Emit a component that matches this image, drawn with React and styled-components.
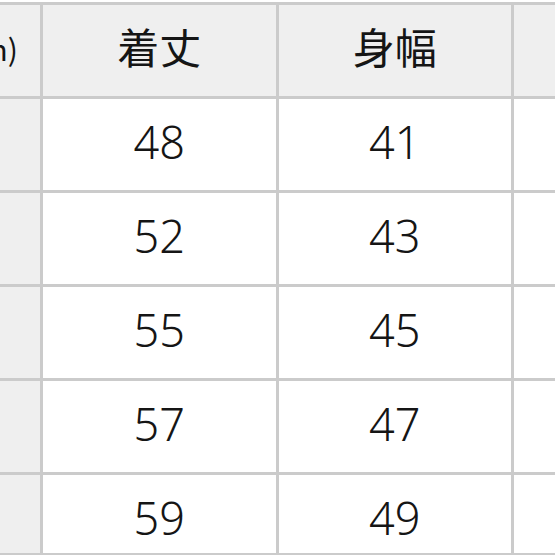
import React from 'react';
import styled, { createGlobalStyle } from 'styled-components';

const GlobalStyle = createGlobalStyle`
  html, body {
    margin: 0;
    padding: 0;
    background: #ffffff;
  }
  #root {
    width: 555px;
    height: 555px;
    overflow: hidden;
  }
`;

const columns = ['着丈', '身幅', '肩幅'];

const rows = [
  { size: 'S', values: ['48', '41', '38'] },
  { size: 'M', values: ['52', '43', '40'] },
  { size: 'L', values: ['55', '45', '42'] },
  { size: 'XL', values: ['57', '47', '44'] },
  { size: 'XXL', values: ['59', '49', '46'] },
];

const SizeTable = styled.div`
  display: grid;
  grid-template-columns: 180px 232.5px 232.5px 232.5px;
  grid-template-rows: repeat(5, 91px) 78px;
  gap: 3px;
  padding: 3px 3px 2px 3px;
  margin: 2px 0 0 -143px;
  width: max-content;
  background: #cbcbcb;
  color: #151515;
`;

const Cell = styled.div`
  display: flex;
  align-items: flex-start;
  justify-content: center;
  height: 100%;
  background: ${p => (p.head ? '#efefef' : '#ffffff')};
  white-space: nowrap;
`;

const HeadCell = styled(Cell)`
  font-family: "Noto Sans CJK JP", sans-serif;
  font-size: 42px;
  line-height: 82px;
`;

const ValueCell = styled(Cell)`
  font-family: "Noto Sans", "Open Sans", sans-serif;
  font-size: 45px;
  font-weight: 300;
  line-height: 86px;
`;

const LabelCell = styled(Cell)`
  font-family: "Noto Sans CJK JP", sans-serif;
  font-size: 40px;
  line-height: 86px;
  background: #efefef;
  justify-content: ${p => (p.head ? 'flex-end' : 'center')};
  padding-right: ${p => (p.head ? '22px' : '0')};
  box-sizing: border-box;
`;

const Unit = styled.span`
  font-size: 30px;
  vertical-align: -6px;
`;

export default function App() {
  return (
    <>
      <GlobalStyle />
      <SizeTable>
        <LabelCell head>
          サイズ<Unit>(cm)</Unit>
        </LabelCell>
        {columns.map(c => (
          <HeadCell head key={c}>{c}</HeadCell>
        ))}
        {rows.map(r => (
          <React.Fragment key={r.size}>
            <LabelCell>{r.size}</LabelCell>
            {r.values.map((v, i) => (
              <ValueCell key={i}>{v}</ValueCell>
            ))}
          </React.Fragment>
        ))}
      </SizeTable>
    </>
  );
}
